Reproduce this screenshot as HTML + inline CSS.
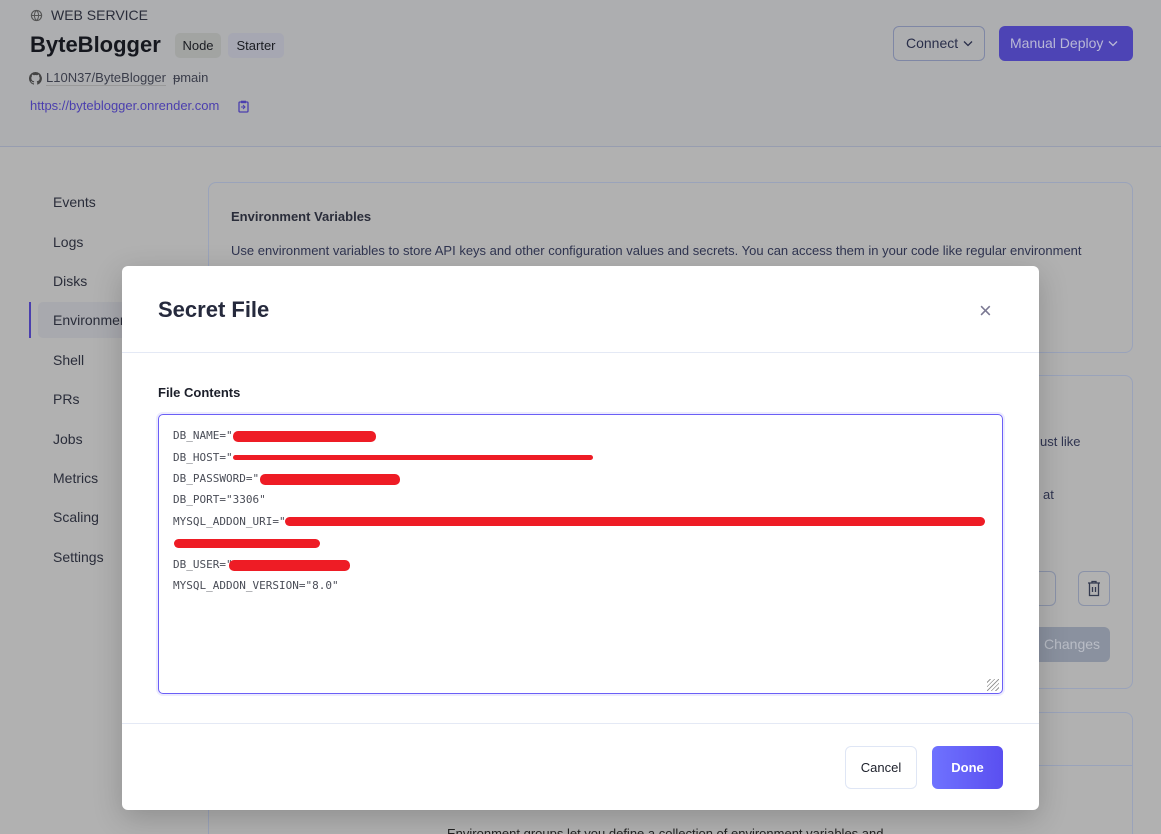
<!DOCTYPE html>
<html><head><meta charset="utf-8"><style>
*{box-sizing:border-box;margin:0;padding:0}
html,body{width:1161px;height:834px;overflow:hidden}
body{background:#b1b1b1;font-family:"Liberation Sans",sans-serif;position:relative;color:#2a2d3a}
.a{position:absolute;white-space:nowrap}
.hdr{position:absolute;left:0;top:0;width:1161px;height:147px;background:#adaeb0;border-bottom:1px solid #979db0}
.card{position:absolute;border:1px solid #9aa3ba;border-radius:8px}
.nav{position:absolute;left:53px;font-size:14px;color:#2a2d3a}
.modal{position:absolute;left:122px;top:266px;width:917px;height:544px;background:#fff;border-radius:6px;box-shadow:0 8px 30px rgba(0,0,0,.2)}
.mono{font-family:"DejaVu Sans Mono","Liberation Mono",monospace;font-size:11px;color:#4a4d57;position:absolute;left:173px;white-space:nowrap}
.red{position:absolute;background:#ee1c25;height:11px;border-radius:5px}
</style></head><body>
<div class="hdr"></div>
<svg class="a" style="left:30px;top:9px" width="13" height="13" viewBox="0 0 14 14"><circle cx="7" cy="7" r="5.5" fill="none" stroke="#555" stroke-width="1.2"/><path d="M1.5 7h11M7 1.5c-3 3-3 8 0 11M7 1.5c3 3 3 8 0 11" fill="none" stroke="#555" stroke-width="1.1"/></svg>
<div class="a" style="left:51px;top:7px;font-size:14px;color:#2a2d3a">WEB SERVICE</div>
<div class="a" style="left:30px;top:32px;font-size:22px;font-weight:bold;color:#15171e">ByteBlogger</div>
<div class="a" style="left:175px;top:33px;width:46px;height:25px;background:#a2a4a2;border-radius:5px;font-size:13px;line-height:25px;text-align:center;color:#1a1c22">Node</div>
<div class="a" style="left:228px;top:33px;width:56px;height:25px;background:#a6a7b2;border-radius:5px;font-size:13px;line-height:25px;text-align:center;color:#1a1c22">Starter</div>
<svg class="a" style="left:29px;top:72px" width="13" height="13" viewBox="0 0 16 16"><path fill="#444" d="M8 0a8 8 0 00-2.5 15.6c.4 0 .5-.2.5-.4v-1.5c-2.2.5-2.7-1-2.7-1-.4-.9-.9-1.2-.9-1.2-.7-.5.1-.5.1-.5.8.1 1.2.8 1.2.8.7 1.3 1.9.9 2.3.7.1-.5.3-.9.5-1.1-1.8-.2-3.6-.9-3.6-4 0-.9.3-1.6.8-2.1-.1-.2-.4-1 .1-2.1 0 0 .7-.2 2.2.8a7.5 7.5 0 014 0c1.5-1 2.2-.8 2.2-.8.4 1.1.2 1.9.1 2.1.5.6.8 1.3.8 2.1 0 3.1-1.9 3.8-3.6 4 .3.3.6.8.6 1.5v2.2c0 .2.1.5.6.4A8 8 0 008 0z"/></svg>
<div class="a" style="left:46px;top:70px;font-size:13px;color:#3a3d4a;border-bottom:1px solid #999">L10N37/ByteBlogger</div>
<div class="a" style="left:173px;top:70px;font-size:13px;color:#3a3d4a">ᵽmain</div>
<div class="a" style="left:30px;top:98px;font-size:13px;color:#4b3fae">https://byteblogger.onrender.com</div>
<svg class="a" style="left:238px;top:100px" width="11" height="13" viewBox="0 0 11 13"><rect x="1" y="2" width="9" height="10" rx="1" fill="none" stroke="#4b3fae" stroke-width="1.3"/><rect x="3" y="0.7" width="5" height="2.5" fill="#4b3fae"/><path d="M3 7h4M5 5l2 2-2 2" stroke="#4b3fae" fill="none"/></svg>
<div class="a" style="left:893px;top:26px;width:92px;height:35px;border:1px solid #7f87a5;border-radius:6px;font-size:14px;line-height:33px;padding-left:12px;color:#2a2f4a">Connect</div>
<svg class="a" style="left:963px;top:40px" width="10" height="7" viewBox="0 0 10 7"><path d="M1 1.5l4 4 4-4" fill="none" stroke="#2a2f4a" stroke-width="1.3"/></svg>
<div class="a" style="left:999px;top:26px;width:134px;height:35px;background:#4d44b5;border-radius:6px;font-size:14px;line-height:35px;padding-left:11px;color:#b9b8d6">Manual Deploy</div>
<svg class="a" style="left:1108px;top:40px" width="10" height="7" viewBox="0 0 10 7"><path d="M1 1.5l4 4 4-4" fill="none" stroke="#b9b8d6" stroke-width="1.3"/></svg>

<div class="nav" style="top:194px">Events</div>
<div class="nav" style="top:234px">Logs</div>
<div class="nav" style="top:273px">Disks</div>
<div class="a" style="left:29px;top:302px;width:2px;height:36px;background:#4a3fae"></div>
<div class="a" style="left:38px;top:302px;width:90px;height:36px;background:#a8a9ae;border-radius:5px"></div>
<div class="nav" style="top:312px">Environment</div>
<div class="nav" style="top:352px">Shell</div>
<div class="nav" style="top:391px">PRs</div>
<div class="nav" style="top:431px">Jobs</div>
<div class="nav" style="top:470px">Metrics</div>
<div class="nav" style="top:509px">Scaling</div>
<div class="nav" style="top:549px">Settings</div>

<div class="card" style="left:208px;top:182px;width:925px;height:171px"></div>
<div class="a" style="left:231px;top:209px;font-size:13px;font-weight:bold;color:#2a2d3a">Environment Variables</div>
<div class="a" style="left:231px;top:243px;font-size:13px;color:#2f3450">Use environment variables to store API keys and other configuration values and secrets. You can access them in your code like regular environment</div>
<div class="card" style="left:208px;top:375px;width:925px;height:314px"></div>
<div class="a" style="left:1040px;top:434px;font-size:13px;color:#2f3450">ust like</div>
<div class="a" style="left:1043px;top:487px;font-size:13px;color:#2f3450">at</div>
<div class="a" style="left:1020px;top:571px;width:36px;height:35px;border:1px solid #8a92a8;border-radius:6px"></div>
<div class="a" style="left:1078px;top:571px;width:32px;height:35px;border:1px solid #8a92a8;border-radius:6px"></div>
<svg class="a" style="left:1086px;top:580px" width="16" height="17" viewBox="0 0 16 17"><path d="M2 3h12M6 3V1.5h4V3M3.5 3.5v12h9v-12M6.5 7v5M9.5 7v5" fill="none" stroke="#333a4f" stroke-width="1.3"/></svg>
<div class="a" style="left:1020px;top:627px;width:90px;height:35px;background:#8a919f;border-radius:6px;font-size:14px;line-height:35px;color:#b9bdc6;padding-left:24px">Changes</div>
<div class="card" style="left:208px;top:712px;width:925px;height:140px"></div>
<div class="a" style="left:209px;top:765px;width:923px;height:1px;background:#9aa3ba"></div>
<div class="a" style="left:447px;top:826px;font-size:13px;color:#222">Environment groups let you define a collection of environment variables and</div>

<div class="modal">
<div class="a" style="left:36px;top:31px;font-size:22px;font-weight:bold;color:#262a3d">Secret File</div>
<div class="a" style="left:857px;top:34px;font-size:22px;color:#7a7892;line-height:22px">×</div>
<div class="a" style="left:0;top:86px;width:917px;height:1px;background:#e4e9f5"></div>
<div class="a" style="left:36px;top:119px;font-size:13px;font-weight:bold;color:#1c1f2a">File Contents</div>
<div class="a" style="left:36px;top:148px;width:845px;height:280px;border:1px solid #6b5ff6;border-radius:5px;box-shadow:0 0 0 2px rgba(107,95,246,.12)"></div>
<div class="a" style="left:865px;top:413px;width:12px;height:12px;background:repeating-linear-gradient(135deg,transparent 0 2px,#999 2px 3px)"></div>
<div class="a" style="left:0;top:457px;width:917px;height:1px;background:#e4e9f5"></div>
<div class="a" style="left:723px;top:480px;width:72px;height:43px;border:1px solid #dfe6f5;border-radius:6px;font-size:13px;line-height:41px;text-align:center;color:#1c1f2a">Cancel</div>
<div class="a" style="left:810px;top:480px;width:71px;height:43px;background:linear-gradient(90deg,#6f72ff,#5a4ff0);border-radius:6px;font-size:13px;line-height:43px;text-align:center;color:#fff;font-weight:bold">Done</div>
</div>
<div class="mono" style="top:429px">DB_NAME="</div>
<div class="red" style="left:233px;top:431px;width:143px"></div>
<div class="mono" style="top:451px">DB_HOST="</div>
<div class="red" style="left:233px;top:455px;width:360px;height:5px"></div>
<div class="mono" style="top:472px">DB_PASSWORD="</div>
<div class="red" style="left:260px;top:474px;width:140px"></div>
<div class="mono" style="top:493px">DB_PORT="3306"</div>
<div class="mono" style="top:515px">MYSQL_ADDON_URI="</div>
<div class="red" style="left:285px;top:517px;width:700px;height:9px"></div>
<div class="red" style="left:174px;top:539px;width:146px;height:9px"></div>
<div class="mono" style="top:558px">DB_USER="</div>
<div class="red" style="left:229px;top:560px;width:121px"></div>
<div class="mono" style="top:579px">MYSQL_ADDON_VERSION="8.0"</div>
</body></html>
